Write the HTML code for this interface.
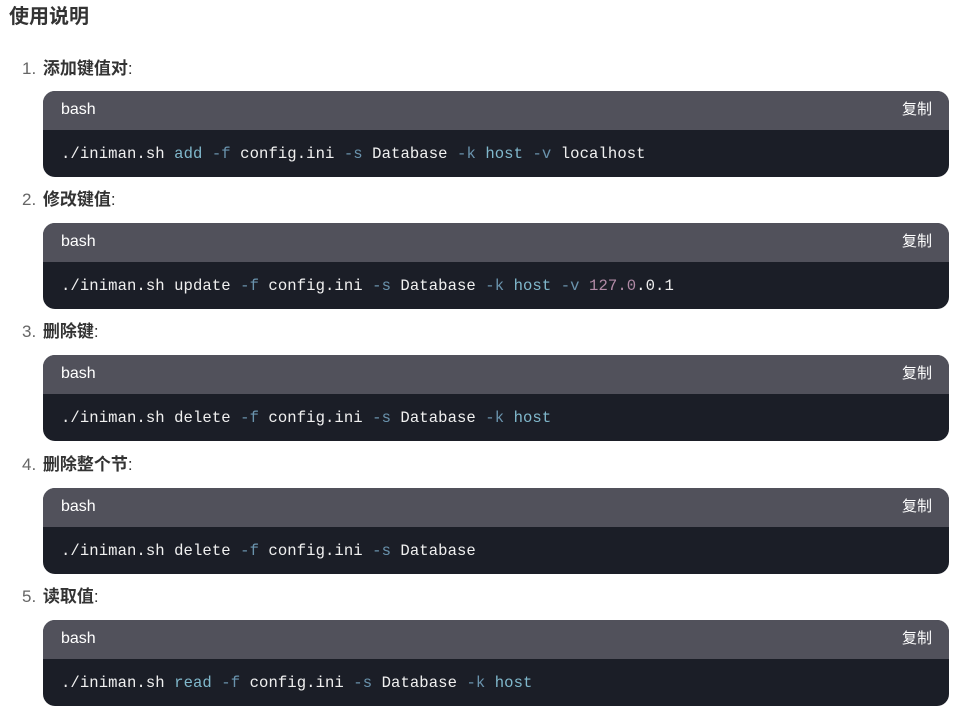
<!DOCTYPE html>
<html><head><meta charset="utf-8"><style>
html,body{margin:0;padding:0;background:#fff;width:965px;height:725px;overflow:hidden}
body{font-family:"Liberation Sans","Noto Sans CJK SC",sans-serif;color:#333}
h1{position:absolute;left:9px;top:3px;margin:0;font-size:20px;font-weight:bold;color:#333;line-height:28px}
.item{position:absolute;left:22px;font-size:17px;line-height:24px;color:#333}
.item .n{color:#666;font-weight:normal;margin-right:2px}
.item b{font-weight:bold}
.blk{position:absolute;left:43px;width:906px;height:86px;border-radius:12px;overflow:hidden;background:#1b1e27}
.hd{height:39px;background:#51515b;color:#fff;font-size:16px;line-height:37px;padding:0 18px;position:relative}
.hd span{position:absolute;right:17px;top:0;font-size:15px}
.cd{font-family:"Liberation Mono",monospace;font-size:15.6px;letter-spacing:0.07px;color:#f0f0f0;padding:1px 18px 0;line-height:47px;white-space:pre}
.k{color:#80b8cc}.f{color:#6a93ad}.num{color:#b18aa6}
</style></head><body>
<h1>使用说明</h1>

<div class="item" style="top:57px"><span class="n">1. </span><b>添加键值对</b>:</div>
<div class="blk" style="top:91px"><div class="hd">bash<span>复制</span></div><div class="cd">./iniman.sh <span class="k">add</span> <span class="f">-f</span> config.ini <span class="f">-s</span> Database <span class="f">-k</span> <span class="k">host</span> <span class="f">-v</span> localhost</div></div>

<div class="item" style="top:188px"><span class="n">2. </span><b>修改键值</b>:</div>
<div class="blk" style="top:223px"><div class="hd">bash<span>复制</span></div><div class="cd">./iniman.sh update <span class="f">-f</span> config.ini <span class="f">-s</span> Database <span class="f">-k</span> <span class="k">host</span> <span class="f">-v</span> <span class="num">127.0</span>.0.1</div></div>

<div class="item" style="top:320px"><span class="n">3. </span><b>删除键</b>:</div>
<div class="blk" style="top:355px"><div class="hd">bash<span>复制</span></div><div class="cd">./iniman.sh delete <span class="f">-f</span> config.ini <span class="f">-s</span> Database <span class="f">-k</span> <span class="k">host</span></div></div>

<div class="item" style="top:453px"><span class="n">4. </span><b>删除整个节</b>:</div>
<div class="blk" style="top:488px"><div class="hd">bash<span>复制</span></div><div class="cd">./iniman.sh delete <span class="f">-f</span> config.ini <span class="f">-s</span> Database</div></div>

<div class="item" style="top:585px"><span class="n">5. </span><b>读取值</b>:</div>
<div class="blk" style="top:620px"><div class="hd">bash<span>复制</span></div><div class="cd">./iniman.sh <span class="k">read</span> <span class="f">-f</span> config.ini <span class="f">-s</span> Database <span class="f">-k</span> <span class="k">host</span></div></div>
</body></html>
